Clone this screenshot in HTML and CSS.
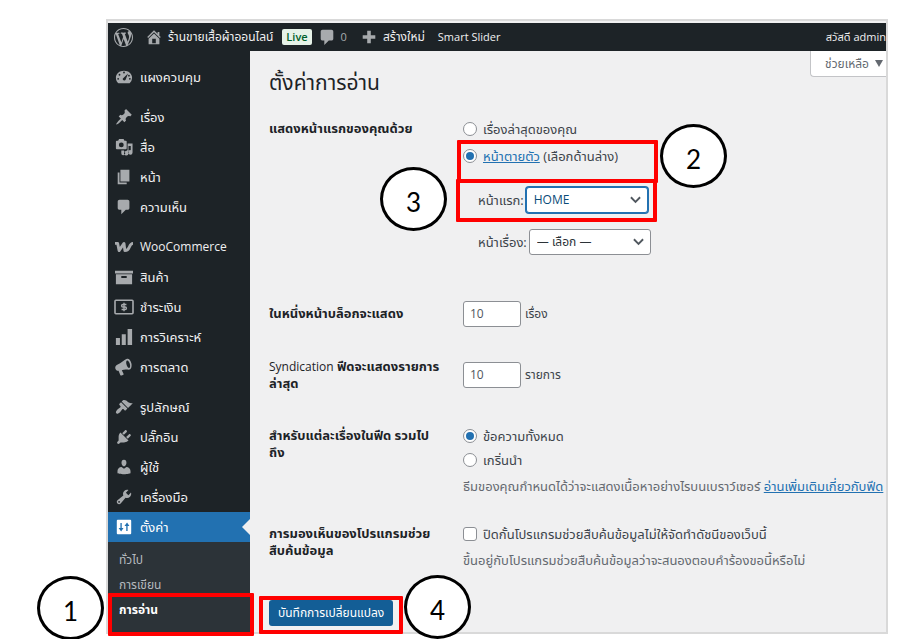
FILE: index.html
```html
<!DOCTYPE html>
<html lang="th">
<head>
    <meta charset="UTF-8">
    <meta name="viewport" content="width=device-width, initial-scale=1.0">
    <title>ตั้งค่าการอ่าน</title>
    <link rel="stylesheet" href="styles.css">
</head>
<body>

<div class="guide">
    <div class="screen">
        <header class="adminbar">
            <svg class="wp-logo" viewBox="0 0 20 20"><path d="M20 10c0-5.51-4.49-10-10-10S0 4.490 0 10s4.490 10 10 10 10-4.490 10-10zM7.780 15.370L4.370 6.220c.55-.02 1.170-.08 1.170-.08.5-.06.44-1.130-.06-1.110 0 0-1.450.11-2.370.11-.18 0-.37 0-.58-.01C4.120 2.690 6.870 1.110 10 1.110c2.330 0 4.450.87 6.050 2.340-.68-.11-1.650.39-1.650 1.580 0 .74.45 1.360.9 2.100.35.61.55 1.360.55 2.460 0 1.490-1.400 5-1.400 5l-3.030-8.370c.54-.02.82-.17.82-.17.5-.05.44-1.250-.06-1.220 0 0-1.440.12-2.380.12-.87 0-2.330-.12-2.330-.12-.5-.03-.56 1.200-.06 1.220l.92.080 1.260 3.410zM17.410 10c.24-.64.74-1.870.43-4.250.7 1.290 1.050 2.710 1.050 4.250 0 3.290-1.730 6.240-4.400 7.780.97-2.590 1.940-5.200 2.920-7.780zM6.100 18.090C3.120 16.650 1.110 13.530 1.110 10c0-1.300.23-2.480.72-3.590C3.250 10.300 4.670 14.200 6.100 18.090zm4.030-6.630l2.580 6.980c-.86.29-1.760.45-2.710.45-.79 0-1.570-.11-2.290-.33.81-2.380 1.620-4.740 2.420-7.100z"/></svg>
            <a class="bar-item" href="#"><svg class="icon" viewBox="0 0 20 20"><path d="M16 8.500l1.530 1.530-1.060 1.060L10 4.600l-6.470 6.490-1.060-1.060L10 2.500l4 4v-2h2v4zm-6-2.460l6 5.990V18H4v-5.970l6-5.990zM12 17v-5H8v5h4z"/></svg>ร้านขายเสื้อผ้าออนไลน์</a>
            <span class="live">Live</span>
            <a class="bar-item comments" href="#"><svg class="icon" viewBox="0 0 20 20"><path d="M5 2h10q.8 0 1.400.6T17 4v8q0 .8-.6 1.400T15 14h-3l-5 5v-5H5q-.8 0-1.400-.6T3 12V4q0-.8.6-1.400T5 2z"/></svg>0</a>
            <a class="bar-item" href="#"><svg class="icon" viewBox="0 0 20 20"><path d="M8 3h4v5h5v4h-5v5H8v-5H3V8h5z"/></svg>สร้างใหม่</a>
            <a class="bar-item latin" href="#">Smart Slider</a>
            <a class="bar-item latin account" href="#">สวัสดี admin</a>
        </header>

        <div class="columns">
            <nav class="sidebar">
                <ul class="menu">
                    <li><a href="#"><svg class="icon" viewBox="0 0 20 20"><path fill-rule="evenodd" d="M3.760 17h12.480A8.900 8.900 0 0 0 19 11c0-4.970-4.030-8-9-8s-9 3.030-9 8c0 2.350 1.060 4.470 2.760 6zM9 5a1 1 0 1 1 2 0 1 1 0 0 1-2 0zM4 7.500a1 1 0 1 1 2 0 1 1 0 0 1-2 0zM8.550 12.500c0-.6.300-1.100.8-1.400L14.500 6l-2.600 6.900a1.800 1.800 0 0 1-3.350-.4zM14.500 8.500a1 1 0 1 1 2 0 1 1 0 0 1-2 0zM2.500 12a1 1 0 1 1 2 0 1 1 0 0 1-2 0zm13 0a1 1 0 1 1 2 0 1 1 0 0 1-2 0z"/></svg>แผงควบคุม</a></li>
                    <li class="gap"><a href="#"><svg class="icon" viewBox="0 0 20 20"><path d="M10.440 3.020l1.820-1.820 6.360 6.350-1.830 1.820c-1.050-.68-2.480-.57-3.410.36l-.75.75c-.92.93-1.040 2.350-.35 3.410l-1.830 1.820-2.410-2.410-2.800 2.790c-.42.42-3.380 2.710-3.800 2.290s1.860-3.390 2.280-3.810l2.790-2.790L4.100 9.360l1.830-1.820c1.050.69 2.480.57 3.400-.36l.75-.75c.93-.92 1.050-2.350.36-3.410z"/></svg>เรื่อง</a></li>
                    <li><a href="#"><svg class="icon" viewBox="0 0 20 20"><path fill-rule="evenodd" d="M13 11.500V4q0-1-1-1h-1.500L9.500 1H4.500L3.500 3H2Q1 3 1 4v7.500q0 1 1 1h10q1 0 1-1zM7 5a2.700 2.700 0 1 1 0 5.400A2.700 2.700 0 0 1 7 5zM14 6h5.500v10a2.500 2.500 0 1 1-2-2.450V9H15v8a2.500 2.500 0 1 1-2-2.450V13.500h1zM7 14h3v1a2.200 2.200 0 1 1-3 2z"/></svg>สื่อ</a></li>
                    <li><a href="#"><svg class="icon" viewBox="0 0 20 20"><path d="M6 15V2h10v13H6zm-1 1h8v2H3V5h2v11z"/></svg>หน้า</a></li>
                    <li><a href="#"><svg class="icon" viewBox="0 0 20 20"><path d="M5 2h9q.8 0 1.400.6T16 4v7q0 .8-.6 1.400T14 13h-2l-5 5v-5H5q-.8 0-1.400-.6T3 11V4q0-.8.6-1.400T5 2z"/></svg>ความเห็น</a></li>
                    <li class="gap"><a class="latin" href="#"><svg class="icon" viewBox="0 0 20 20"><path fill="none" stroke="currentColor" stroke-width="3.200" stroke-linejoin="round" d="M0 6h3l1.500 8L10 6l1 8q3.500 0 5-4t4-4"/></svg>WooCommerce</a></li>
                    <li><a href="#"><svg class="icon" viewBox="0 0 20 20"><path fill-rule="evenodd" d="M0 3h20v3H0zM1 7h18v11H1zM7 9v2h6V9z"/></svg>สินค้า</a></li>
                    <li><a href="#"><svg class="icon" viewBox="0 0 20 20"><rect x="0" y="2.500" width="20" height="15" rx="1" fill="none" stroke="currentColor" stroke-width="1.800"/><path fill="none" stroke="currentColor" stroke-width="1.500" d="M12.700 7.200H8.800q-1.500 0-1.500 1.400T8.800 10h2.400q1.500 0 1.500 1.400t-1.500 1.400H7.300M10 5.200v9.600"/></svg>ชำระเงิน</a></li>
                    <li><a href="#"><svg class="icon" viewBox="0 0 20 20"><path d="M1 11h4.500v8H1zM7.500 7H12v12H7.500zM14 1h5v18h-5z"/></svg>การวิเคราะห์</a></li>
                    <li><a href="#"><svg class="icon" viewBox="0 0 20 20"><path fill-rule="evenodd" d="M18.150 5.940c.46 1.620.38 3.220-.02 4.480-.42 1.280-1.260 2.180-2.300 2.480-.16.060-.26.060-.4.060-.06.020-.12.020-.18.020-1.800.02-5.300-.5-7.700.7l1.800 3.500c.4.900.3 1.500-.6 1.800l-1.500.5c-.6.100-1.100 0-1.400-.7l-1.900-4.600c-1.700.2-3.050-.9-3.500-2.300-.5-1.700.1-3.500 2-4.300C7 5.300 10.400 2.300 12.600 1.100c.5-.3 1-.4 1.400-.4 1.900 0 3.400 2.300 4.150 5.240zm-2.300 5.200c1-.5 1.200-2.700.6-4.800-.7-2.200-2.100-3.900-3.100-3.600-1 .4-1.200 2.600-.5 4.700.6 2.200 2 4 3 3.700z"/></svg>การตลาด</a></li>
                    <li class="gap"><a href="#"><svg class="icon" viewBox="0 0 20 20"><path d="M14.480 11.060L7.410 3.990l1.500-1.500c.5-.56 2.300-.47 3.510.32 1.210.8 1.430 1.280 2.910 2.100 1.180.64 2.450 1.260 4.450.85zm-.71.71L6.700 4.700 4.930 6.470c-.39.39-.39 1.020 0 1.410l1.060 1.060c.39.39.39 1.030 0 1.420-.6.600-1.430 1.110-2.210 1.690-.35.26-.7.530-1.010.84C1.430 14.230.4 16.080 1.400 17.070c.99 1 2.840-.03 4.180-1.360.31-.31.580-.66.850-1.020.57-.78 1.080-1.610 1.690-2.210.39-.39 1.020-.39 1.410 0l1.060 1.060c.39.39 1.020.39 1.410 0z"/></svg>รูปลักษณ์</a></li>
                    <li><a href="#"><svg class="icon" viewBox="0 0 20 20"><path d="M13.110 4.360L9.870 7.600 8 5.730l3.240-3.240c.35-.34 1.050-.2 1.560.32.520.51.660 1.210.31 1.550zm-8 1.770l.91-1.120 9.010 9.010-1.190.84c-.71.71-2.630 1.160-3.820 1.160H6.140L4.900 17.260c-.59.590-1.540.590-2.120 0-.59-.58-.59-1.530 0-2.120l1.240-1.240v-3.880c0-1.130.4-3.190 1.090-3.890zm7.260 3.970l3.240-3.240c.34-.35 1.040-.21 1.550.31.520.51.660 1.210.31 1.550l-3.240 3.250z"/></svg>ปลั๊กอิน</a></li>
                    <li><a href="#"><svg class="icon" viewBox="0 0 20 20"><path d="M10 9.250c-2.270 0-2.730-3.440-2.730-3.440C7 4.020 7.820 2 9.970 2c2.160 0 2.980 2.020 2.710 3.810 0 0-.41 3.440-2.680 3.440zm0 2.570L12.720 10c2.390 0 4.520 2.330 4.520 4.530v2.490s-3.650 1.130-7.240 1.130c-3.650 0-7.240-1.130-7.240-1.130v-2.490c0-2.250 1.940-4.480 4.470-4.480z"/></svg>ผู้ใช้</a></li>
                    <li><a href="#"><svg class="icon" viewBox="0 0 20 20"><path d="M16.680 9.770c-1.340 1.340-3.300 1.670-4.950.99l-5.410 6.520c-.99.990-2.590.990-3.580 0s-.99-2.590 0-3.570l6.520-5.420c-.68-1.650-.35-3.610.99-4.950 1.280-1.280 3.120-1.620 4.720-1.060l-2.890 2.890 2.820 2.820 2.860-2.870c.53 1.580.18 3.390-1.080 4.650zM3.810 16.210c.4.390 1.040.39 1.430 0 .4-.4.4-1.040 0-1.430-.39-.4-1.030-.4-1.430 0-.39.39-.39 1.030 0 1.430z"/></svg>เครื่องมือ</a></li>
                    <li><a class="current" href="#"><svg class="icon" viewBox="0 0 20 20"><path fill-rule="evenodd" d="M3 2h14q1 0 1 1v14q0 1-1 1H3q-1 0-1-1V3q0-1 1-1zM6 5.500v5.500H4L6.800 15l2.700-4h-2V5.500zM12.500 14.500V9h-2l2.900-4L16 9h-2v5.500z"/></svg>ตั้งค่า</a></li>
                </ul>
                <ul class="submenu">
                    <li><a href="#">ทั่วไป</a></li>
                    <li><a href="#">การเขียน</a></li>
                    <li><a class="current" href="#">การอ่าน</a></li>
                </ul>
            </nav>

            <main class="content">
                <button class="help" type="button">ช่วยเหลือ <span class="arrow"></span></button>
                <h1>ตั้งค่าการอ่าน</h1>
                <form>
                    <table class="form-table">
                        <tr>
                            <th scope="row">แสดงหน้าแรกของคุณด้วย</th>
                            <td>
                                <div class="choices front">
                                    <label><input type="radio" name="front"> เรื่องล่าสุดของคุณ</label>
                                    <label><input type="radio" name="front" checked> <span><a href="#">หน้าตายตัว</a> (เลือกด้านล่าง)</span></label>
                                </div>
                                <div class="pages">
                                    <div class="page-row">
                                        <label for="home-page">หน้าแรก:</label>
                                        <span class="select focused">
                                            <select id="home-page"><option>HOME</option></select>
                                            <svg viewBox="0 0 12 8"><path d="M1 1l5 5 5-5"/></svg>
                                        </span>
                                    </div>
                                    <div class="page-row">
                                        <label for="posts-page">หน้าเรื่อง:</label>
                                        <span class="select">
                                            <select id="posts-page"><option>— เลือก —</option></select>
                                            <svg viewBox="0 0 12 8"><path d="M1 1l5 5 5-5"/></svg>
                                        </span>
                                    </div>
                                </div>
                            </td>
                        </tr>
                        <tr class="middle">
                            <th scope="row"><label for="per-page">ในหนึ่งหน้าบล็อกจะแสดง</label></th>
                            <td><div class="amount"><input type="text" id="per-page" value="10"> เรื่อง</div></td>
                        </tr>
                        <tr class="middle">
                            <th scope="row"><label for="per-feed"><span class="latin">Syndication</span> ฟีดจะแสดงรายการ<br>ล่าสุด</label></th>
                            <td><div class="amount"><input type="text" id="per-feed" value="10"> รายการ</div></td>
                        </tr>
                        <tr>
                            <th scope="row">สำหรับแต่ละเรื่องในฟีด รวมไป<br>ถึง</th>
                            <td>
                                <div class="choices">
                                    <label><input type="radio" name="feed" checked> ข้อความทั้งหมด</label>
                                    <label><input type="radio" name="feed"> เกริ่นนำ</label>
                                </div>
                                <p>ธีมของคุณกำหนดได้ว่าจะแสดงเนื้อหาอย่างไรบนเบราว์เซอร์ <a href="#">อ่านเพิ่มเติมเกี่ยวกับฟีด</a></p>
                            </td>
                        </tr>
                        <tr>
                            <th scope="row">การมองเห็นของโปรแกรมช่วย<br>สืบค้นข้อมูล</th>
                            <td>
                                <div class="choices">
                                    <label><input type="checkbox"> ปิดกั้นโปรแกรมช่วยสืบค้นข้อมูลไม่ให้จัดทำดัชนีของเว็บนี้</label>
                                </div>
                                <p>ขึ้นอยู่กับโปรแกรมช่วยสืบค้นข้อมูลว่าจะสนองตอบคำร้องขอนี้หรือไม่</p>
                            </td>
                        </tr>
                    </table>
                    <button class="save" type="button">บันทึกการเปลี่ยนแปลง</button>
                </form>
            </main>
        </div>
    </div>

    <!-- numbered steps over the screen -->
    <div class="mark mark-reading"></div>
    <div class="mark mark-static"></div>
    <div class="mark mark-home"></div>
    <div class="mark mark-save"></div>
    <div class="step step-1">1</div>
    <div class="step step-2">2</div>
    <div class="step step-3">3</div>
    <div class="step step-4">4</div>
</div>

</body>
</html>
```
FILE: styles.css
```css
* {
    box-sizing: border-box;
}
body {
    margin: 0;
    background: #fff;
    color: #3c434a;
    font-family: "Open Sans", "Noto Sans Thai", sans-serif;
    font-size: 13px;
    line-height: 18px;
}
ul {
    margin: 0;
    padding: 0;
    list-style: none;
}
a {
    color: #2271b1;
}
button, input, select {
    font: inherit;
    font-size: 12px;
}
.icon {
    width: 18px;
    height: 18px;
    flex: none;
    fill: currentColor;
    color: #a7aaad;
    overflow: visible;
}
.guide {
    position: relative;
    height: 100vh;
    padding: 19px 18px 5px 106px;
    overflow: hidden;
}
.screen {
    display: flex;
    flex-direction: column;
    height: 100%;
    border: 2px solid #d9d9d9;
    overflow: hidden;
    background: #f0f0f1;
}

/* top bar */
.adminbar {
    display: flex;
    flex: none;
    align-items: center;
    height: 30px;
    padding-left: 6px;
    border-top: 2px solid #f0f0f1;
    background: #1d2327;
    white-space: nowrap;
}
.wp-logo {
    width: 19px;
    height: 19px;
    margin-right: 12px;
    fill: #a7aaad;
}
.bar-item {
    display: flex;
    align-items: center;
    gap: 5px;
    margin-right: 13px;
    color: #f0f0f1;
    font-size: 12px;
    text-decoration: none;
}
.bar-item.latin {
    font-size: 11px;
}
.live {
    margin: 0 6px 0 -4px;
    padding: 0 4px;
    border-radius: 2px;
    background: #e6f2e8;
    color: #00602b;
    font-size: 11px;
    line-height: 16px;
    font-weight: 600;
}
.comments {
    color: #a7aaad;
    font-size: 11px;
}
.bar-item.account {
    margin: 0 0 0 auto;
}
.columns {
    display: flex;
    flex: 1;
}

/* side menu */
.sidebar {
    display: flex;
    flex: none;
    flex-direction: column;
    width: 142px;
    padding-top: 11px;
    background: #1d2327;
}
.menu a {
    position: relative;
    display: flex;
    align-items: center;
    gap: 7px;
    height: 30px;
    padding-left: 7px;
    color: #f0f0f1;
    text-decoration: none;
}
.menu .latin {
    font-size: 12px;
}
.menu .gap {
    margin-top: 10px;
}
.menu .current {
    background: #2271b1;
    color: #fff;
}
.menu .current .icon {
    color: #fff;
}
.menu .current::after {
    content: "";
    position: absolute;
    right: 0;
    border: 8px solid transparent;
    border-right-color: #f0f0f1;
    border-left: 0;
}
.submenu {
    flex: 1;
    padding: 5px 0 5px 11px;
    background: #2c3338;
}
.submenu a {
    display: block;
    color: #b4b9be;
    font-size: 12px;
    line-height: 25px;
    text-decoration: none;
}
.submenu .current {
    color: #fff;
    font-weight: 700;
}

/* settings page */
.content {
    position: relative;
    flex: 1;
    min-width: 0;
    padding: 16px 0 0 19px;
}
.help {
    position: absolute;
    top: 0;
    right: 0;
    display: flex;
    align-items: center;
    gap: 6px;
    height: 26px;
    padding: 0 3px 0 14px;
    border: 1px solid #c3c4c7;
    border-width: 0 0 1px 1px;
    border-radius: 0 0 0 4px;
    background: #fff;
    color: #646970;
}
.arrow {
    border: 4px solid transparent;
    border-top: 7px solid #646970;
    border-bottom: 0;
}
h1 {
    margin: 0 0 1px;
    color: #1d2327;
    font-size: 21px;
    font-weight: 400;
    line-height: 30px;
}
.form-table {
    width: 100%;
    border-collapse: collapse;
}
th, td {
    padding: 22px 0 8px;
    text-align: left;
    vertical-align: top;
}
th {
    width: 194px;
    color: #1d2327;
    font-weight: 700;
    line-height: 17px;
}
th .latin {
    font-size: 12px;
    font-weight: 500;
}
.middle th, .middle td {
    height: 61px;
    padding-top: 0;
    padding-bottom: 0;
    vertical-align: middle;
}
.choices {
    display: flex;
    flex-direction: column;
    gap: 6px;
}
.choices label {
    display: flex;
    align-items: center;
    gap: 6px;
}
.front {
    gap: 9px;
}
input[type="radio"], input[type="checkbox"] {
    display: grid;
    place-items: center;
    appearance: none;
    width: 14px;
    height: 14px;
    margin: 0;
    border: 1px solid #8c8f94;
    border-radius: 50%;
    background: #fff;
}
input[type="checkbox"] {
    border-radius: 3px;
}
input[type="radio"]:checked::before {
    content: "";
    width: 8px;
    height: 8px;
    border-radius: 50%;
    background: #2271b1;
}
.pages {
    display: flex;
    flex-direction: column;
    gap: 16px;
    margin: 22px 0 20px 15px;
}
.page-row {
    display: flex;
    align-items: center;
    gap: 2px;
}
.select {
    position: relative;
}
.select select {
    display: block;
    appearance: none;
    width: 122px;
    height: 26px;
    padding: 0 7px;
    border: 1px solid #8c8f94;
    border-radius: 3px;
    background: #fff;
    color: #2c3338;
}
.select svg {
    position: absolute;
    top: 9px;
    right: 7px;
    width: 11px;
    height: 8px;
    fill: none;
    stroke: #50575e;
    stroke-width: 2;
}
.focused select {
    border-color: #2271b1;
    box-shadow: 0 0 0 1px #2271b1;
    color: #0a4b78;
}
.amount {
    display: flex;
    align-items: center;
    gap: 4px;
    font-size: 12px;
}
.amount input {
    width: 58px;
    height: 26px;
    padding: 0 6px;
    border: 1px solid #8c8f94;
    border-radius: 3px;
    background: #fff;
    color: #50575e;
}
p {
    margin: 8px 0 0;
    color: #646970;
    white-space: nowrap;
}
.save {
    height: 26px;
    margin-top: 23px;
    padding: 0 9px;
    border: 0;
    border-radius: 3px;
    background: #135e96;
    color: #fff;
}

/* step marks */
.mark {
    position: absolute;
    border: 4px solid #f00;
    border-radius: 1px;
}
.mark-reading {
    left: 108px;
    top: 593px;
    width: 146px;
    height: 43px;
}
.mark-static {
    left: 457px;
    top: 140px;
    width: 201px;
    height: 43px;
}
.mark-home {
    left: 456px;
    top: 179px;
    width: 201px;
    height: 43px;
}
.mark-save {
    left: 259px;
    top: 596px;
    width: 144px;
    height: 38px;
}
.step {
    position: absolute;
    width: 67px;
    height: 64px;
    border: 3px solid #000;
    border-radius: 50%;
    background: #fff;
    color: #000;
    font-family: Lato, sans-serif;
    font-size: 26px;
    line-height: 64px;
    text-align: center;
}
.step-1 {
    left: 37px;
    top: 576px;
}
.step-2 {
    left: 660px;
    top: 124px;
}
.step-3 {
    left: 380px;
    top: 167px;
}
.step-4 {
    left: 404px;
    top: 575px;
}
```
